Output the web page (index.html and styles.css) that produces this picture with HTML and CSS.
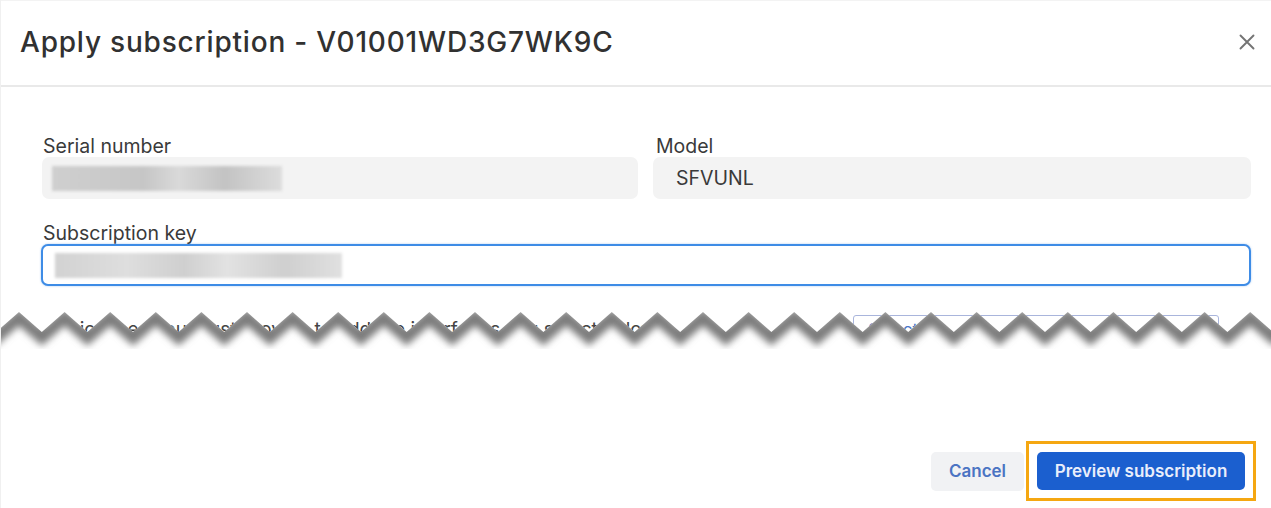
FILE: index.html
```html
<!DOCTYPE html>
<html lang="en">
<head>
<meta charset="utf-8">
<title>Apply subscription</title>
<link rel="stylesheet" href="styles.css">
</head>
<body>
<div class="dialog">
  <header class="hdr">
    <h1 class="title">Apply subscription - V01001WD3G7WK9C</h1>
    <button class="close" aria-label="Close">
      <svg width="18" height="18" viewBox="0 0 18 18"><path d="M2.5 2.5 L15.5 15.5 M15.5 2.5 L2.5 15.5" stroke="#747474" stroke-width="1.9" stroke-linecap="round" fill="none"/></svg>
    </button>
  </header>

  <div class="content">
    <div class="row2">
      <div class="field">
        <label class="lbl">Serial number</label>
        <div class="ro"><span class="redact redact-serial"></span></div>
      </div>
      <div class="field">
        <label class="lbl">Model</label>
        <div class="ro"><span class="ro-text">SFVUNL</span></div>
      </div>
    </div>
    <div class="field">
      <label class="lbl">Subscription key</label>
      <div class="inp"><span class="redact redact-key"></span></div>
    </div>
  </div>

  <div class="tear">
    <div class="tear-row">
      <p class="tear-text">Licenses you must provide to add the interfaces you select below</p>
      <span class="tear-btn">Select</span>
    </div>
    <svg class="tear-edge" width="1271" height="44" viewBox="0 0 1271 44">
      <defs>
        <clipPath id="below">
          <path d="M-27.6,0 l22.8,20 l22.8,-20 l22.8,20 l22.8,-20 l22.8,20 l22.8,-20 l22.8,20 l22.8,-20 l22.8,20 l22.8,-20 l22.8,20 l22.8,-20 l22.8,20 l22.8,-20 l22.8,20 l22.8,-20 l22.8,20 l22.8,-20 l22.8,20 l22.8,-20 l22.8,20 l22.8,-20 l22.8,20 l22.8,-20 l22.8,20 l22.8,-20 l22.8,20 l22.8,-20 l22.8,20 l22.8,-20 l22.8,20 l22.8,-20 l22.8,20 l22.8,-20 l22.8,20 l22.8,-20 l22.8,20 l22.8,-20 l22.8,20 l22.8,-20 l22.8,20 l22.8,-20 l22.8,20 l22.8,-20 l22.8,20 l22.8,-20 l22.8,20 l22.8,-20 l22.8,20 l22.8,-20 l22.8,20 l22.8,-20 l22.8,20 l22.8,-20 l22.8,20 l22.8,-20 l22.8,20 l22.8,-20 l22.8,20 l22.8,-20 l22.8,20 l22.8,-20 l22.8,20 l22.8,-20 L1300,44 L-30,44 Z"/>
        </clipPath>
        <filter id="soft" x="-5%" y="-60%" width="110%" height="220%">
          <feGaussianBlur stdDeviation="3.8"/>
        </filter>
      </defs>
      <g clip-path="url(#below)">
        <rect x="-30" y="0" width="1340" height="44" fill="#ffffff"/>
        <path filter="url(#soft)" fill="none" stroke="#7c7c7c" stroke-width="13" d="M-27.6,5 l22.8,20 l22.8,-20 l22.8,20 l22.8,-20 l22.8,20 l22.8,-20 l22.8,20 l22.8,-20 l22.8,20 l22.8,-20 l22.8,20 l22.8,-20 l22.8,20 l22.8,-20 l22.8,20 l22.8,-20 l22.8,20 l22.8,-20 l22.8,20 l22.8,-20 l22.8,20 l22.8,-20 l22.8,20 l22.8,-20 l22.8,20 l22.8,-20 l22.8,20 l22.8,-20 l22.8,20 l22.8,-20 l22.8,20 l22.8,-20 l22.8,20 l22.8,-20 l22.8,20 l22.8,-20 l22.8,20 l22.8,-20 l22.8,20 l22.8,-20 l22.8,20 l22.8,-20 l22.8,20 l22.8,-20 l22.8,20 l22.8,-20 l22.8,20 l22.8,-20 l22.8,20 l22.8,-20 l22.8,20 l22.8,-20 l22.8,20 l22.8,-20 l22.8,20 l22.8,-20 l22.8,20 l22.8,-20 l22.8,20 l22.8,-20 l22.8,20 l22.8,-20 l22.8,20 l22.8,-20"/>
      </g>
    </svg>
  </div>

  <footer class="ftr">
    <button class="btn btn-cancel">Cancel</button>
    <span class="highlight">
      <button class="btn btn-primary">Preview subscription</button>
    </span>
  </footer>
</div>
</body>
</html>
```

FILE: styles.css
```css
* { box-sizing: border-box; }
html, body {
  margin: 0;
  padding: 0;
  background: #ffffff;
}
body {
  font-family: Inter, "Noto Sans", "Liberation Sans", sans-serif;
  color: #333333;
  width: 1271px;
  height: 508px;
  overflow: hidden;
}
.dialog {
  width: 1271px;
  height: 508px;
  display: flex;
  flex-direction: column;
  border-left: 1px solid #f0f0f0;
}
.hdr {
  height: 87px;
  display: flex;
  align-items: center;
  justify-content: space-between;
  padding: 0 12px 3px 19px;
  border-bottom: 2px solid #e9e9e9;
  border-top: 1px solid #f3f3f3;
}
.title {
  margin: 0;
  font-size: 28px;
  font-weight: 500;
  color: #313131;
  letter-spacing: 0.8px;
}
.close {
  border: 0;
  background: transparent;
  padding: 0;
  width: 24px;
  height: 24px;
  display: flex;
  align-items: center;
  justify-content: center;
}
.content {
  padding: 48px 20px 0 41px;
  display: flex;
  flex-direction: column;
  gap: 23px;
}
.row2 {
  display: grid;
  grid-template-columns: 596px 1fr;
  gap: 16px;
}
.field {
  display: flex;
  flex-direction: column;
  gap: 0;
}
.lbl {
  font-size: 19.5px;
  line-height: 22px;
  color: #3a3a3a;
  padding-left: 1px;
}
.ro {
  height: 42px;
  background: #f3f3f3;
  border-radius: 7px;
  display: flex;
  align-items: center;
  padding-left: 10px;
}
.row2 .field:last-child .ro { margin-left: -1px; padding-left: 23px; }
.row2 .field:last-child .lbl { padding-left: 2px; }
.ro-text {
  font-size: 19.5px;
  color: #3a3a3a;
}
.inp {
  height: 42px;
  border: 2px solid #3e8ce6;
  border-radius: 7px;
  background: #ffffff;
  display: flex;
  align-items: center;
  padding-left: 12px;
  margin-left: -1px;
  box-shadow: 0 0 2px rgba(62, 140, 230, 0.5);
}
.redact {
  display: block;
  height: 25px;
  background: linear-gradient(90deg, #cfcfcf 0%, #c6c6c6 40%, #d9d9d9 55%, #c3c3c3 75%, #dcdcdc 100%);
  filter: blur(1.5px);
}
.redact-serial { width: 230px; }
.redact-key {
  width: 287px;
  background: linear-gradient(90deg, #d2d2d2 0%, #dedede 25%, #cfcfcf 45%, #e2e2e2 60%, #cfcfcf 80%, #e0e0e0 100%);
}
.tear {
  position: relative;
  margin-top: 26px;
  height: 44px;
}
.tear-row {
  display: flex;
  align-items: flex-start;
  justify-content: space-between;
  padding: 0 52px 0 68px;
}
.tear-text {
  margin: 6px 0 0;
  font-size: 19px;
  color: #444444;
  white-space: nowrap;
}
.tear-btn {
  width: 366px;
  height: 36px;
  margin-top: 3px;
  border: 1.5px solid #a9b5dc;
  border-radius: 3px;
  color: #4a78c8;
  font-size: 17px;
  padding: 4px 0 0 14px;
}
.tear-edge {
  position: absolute;
  left: 0;
  top: 0;
  display: block;
}
.ftr {
  margin-top: auto;
  display: flex;
  justify-content: flex-end;
  align-items: center;
  gap: 2px;
  padding: 0 15px 7px 0;
}
.btn {
  font-family: Inter, "Noto Sans", "Liberation Sans", sans-serif;
  font-size: 17px;
  font-weight: 600;
  border: 0;
  border-radius: 5px;
  height: 39px;
  cursor: pointer;
}
.btn-cancel {
  width: 93px;
  background: #f1f2f4;
  color: #4b74c3;
}
.highlight {
  display: inline-flex;
  border: 3px solid #f5a711;
  padding: 8px;
}
.btn-primary {
  width: 208px;
  height: 38px;
  background: #1b5fcf;
  color: #e9eefb;
}
```
